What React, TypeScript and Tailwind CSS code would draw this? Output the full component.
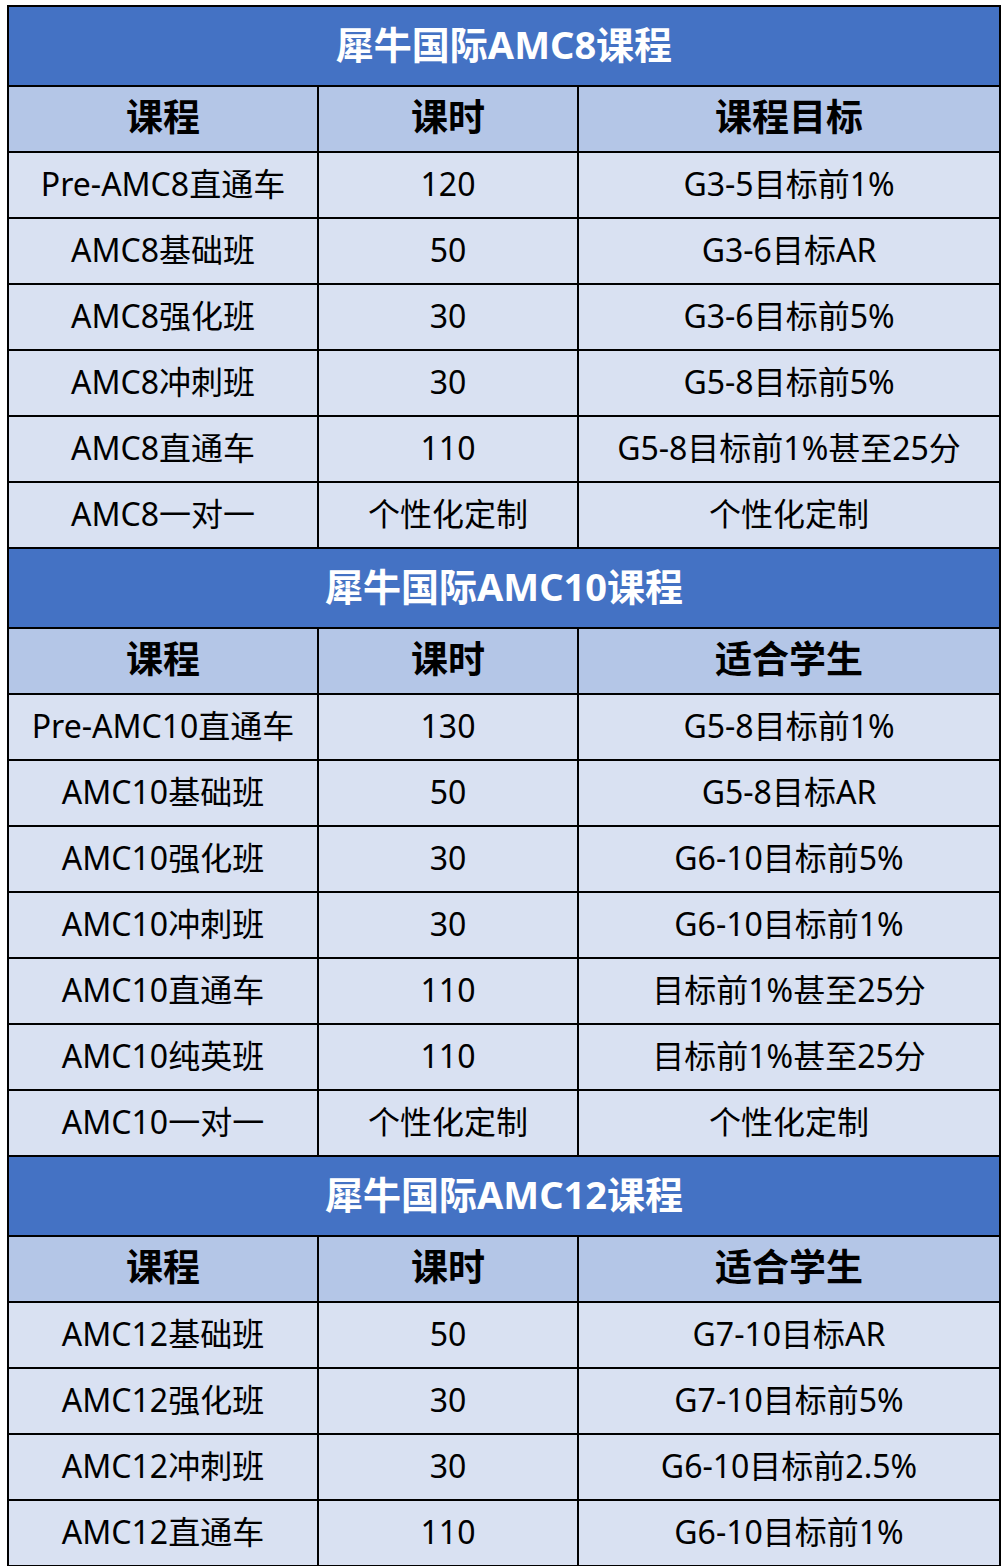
import React from 'react';

interface Section {
  title: string;
  target: string;
  rows: [string, string, string][];
}

const sections: Section[] = [
  {
    title: '犀牛国际AMC8课程',
    target: '课程目标',
    rows: [
      ['Pre-AMC8直通车', '120', 'G3-5目标前1%'],
      ['AMC8基础班', '50', 'G3-6目标AR'],
      ['AMC8强化班', '30', 'G3-6目标前5%'],
      ['AMC8冲刺班', '30', 'G5-8目标前5%'],
      ['AMC8直通车', '110', 'G5-8目标前1%甚至25分'],
      ['AMC8一对一', '个性化定制', '个性化定制'],
    ],
  },
  {
    title: '犀牛国际AMC10课程',
    target: '适合学生',
    rows: [
      ['Pre-AMC10直通车', '130', 'G5-8目标前1%'],
      ['AMC10基础班', '50', 'G5-8目标AR'],
      ['AMC10强化班', '30', 'G6-10目标前5%'],
      ['AMC10冲刺班', '30', 'G6-10目标前1%'],
      ['AMC10直通车', '110', '目标前1%甚至25分'],
      ['AMC10纯英班', '110', '目标前1%甚至25分'],
      ['AMC10一对一', '个性化定制', '个性化定制'],
    ],
  },
  {
    title: '犀牛国际AMC12课程',
    target: '适合学生',
    rows: [
      ['AMC12基础班', '50', 'G7-10目标AR'],
      ['AMC12强化班', '30', 'G7-10目标前5%'],
      ['AMC12冲刺班', '30', 'G6-10目标前2.5%'],
      ['AMC12直通车', '110', 'G6-10目标前1%'],
    ],
  },
];

const grid = 'grid grid-cols-[308px_258px_420px] gap-[2px]';

const App: React.FC = () => {
  return (
    <div className="min-h-[1566px] bg-white pt-[5px] pl-[7px] font-['Noto_Sans','Noto_Sans_CJK_SC',sans-serif]">
      <div className="w-[994px] bg-black p-[2px] flex flex-col gap-[2px]">
        {sections.map((s) => (
          <React.Fragment key={s.title}>
            <div className="h-[78px] pb-[4px] bg-[#4472C4] flex items-center justify-center text-white text-[38px] font-bold">
              {s.title}
            </div>
            <div className={grid}>
              {['课程', '课时', s.target].map((h) => (
                <div key={h} className="h-[64px] pb-[4px] bg-[#B4C6E7] flex items-center justify-center text-black text-[37px] font-bold">
                  {h}
                </div>
              ))}
            </div>
            {s.rows.map((r) => (
              <div key={r[0]} className={grid}>
                {r.map((c, i) => (
                  <div key={i} className="h-[64px] pb-[2px] bg-[#D9E1F2] flex items-center justify-center text-black text-[32px] whitespace-nowrap">
                    {c}
                  </div>
                ))}
              </div>
            ))}
          </React.Fragment>
        ))}
      </div>
    </div>
  );
};

export default App;
